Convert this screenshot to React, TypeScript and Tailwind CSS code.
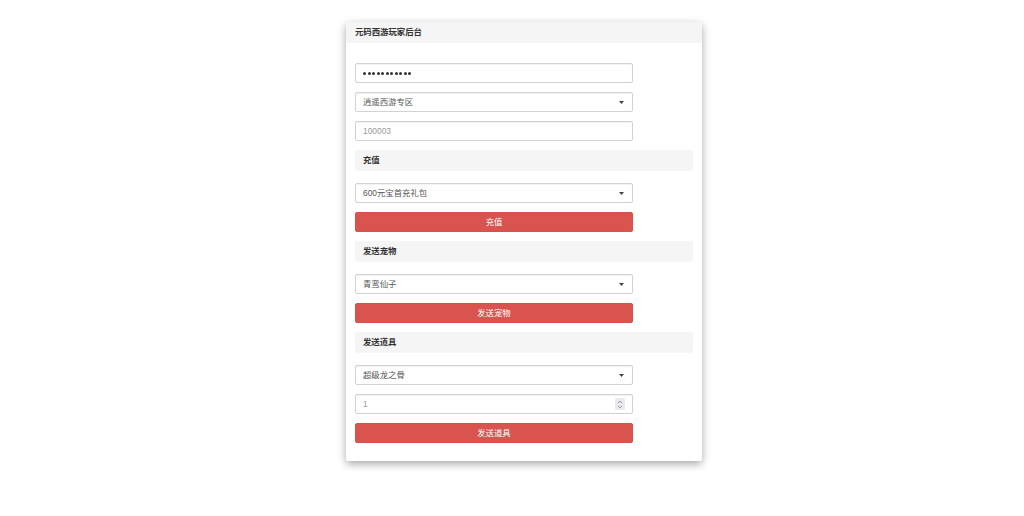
import React from "react";

const font = { fontFamily: '"Liberation Sans", "Noto Sans CJK SC", sans-serif' };

function Arrow() {
  return (
    <svg className="pointer-events-none absolute right-[8px] top-[8px]" width="5" height="3" viewBox="0 0 5 3">
      <path d="M0 0 L5 0 L2.5 3 Z" fill="#444" />
    </svg>
  );
}

const boxCls =
  "relative mb-[9px] h-[20px] w-[278px] rounded-[2px] border border-[#d2d2d2] bg-white shadow-[inset_0_1px_1px_rgba(0,0,0,0.06)]";

function Select({ value }: { value: string }) {
  return (
    <div className={boxCls}>
      <div className="pl-[7px] text-[8.4px] leading-[18px] text-[#555]">{value}</div>
      <Arrow />
    </div>
  );
}

function Input({ value, muted, spinner }: { value: string; muted?: boolean; spinner?: boolean }) {
  return (
    <div className={boxCls}>
      <div className={"pl-[7px] text-[8.4px] leading-[18px] " + (muted ? "text-[#999]" : "text-[#555]")}>{value}</div>
      {spinner && (
        <div className="absolute right-[7px] top-[3px] flex h-[12px] w-[10px] flex-col items-center justify-center rounded-[1px] bg-[#ebebef]">
          <svg width="6" height="9" viewBox="0 0 6 9">
            <path d="M1 3.2 L3 1.2 L5 3.2" stroke="#777" strokeWidth="0.8" fill="none" />
            <path d="M1 5.8 L3 7.8 L5 5.8" stroke="#777" strokeWidth="0.8" fill="none" />
          </svg>
        </div>
      )}
    </div>
  );
}

function Button({ label }: { label: string }) {
  return (
    <div className="mb-[9px] h-[20px] w-[278px] rounded-[2px] border border-[#d6504c] bg-[#d9534f] text-center text-[8.4px] leading-[18px] text-white">
      {label}
    </div>
  );
}

function Section({ label }: { label: string }) {
  return (
    <div className="mb-[12px] h-[21px] w-full rounded-[2px] bg-[#f5f5f5] pl-[8px] text-[8.4px] font-bold leading-[21px] text-[#333]">
      {label}
    </div>
  );
}

export default function App() {
  return (
    <div className="min-h-[516px] w-[1024px] bg-white pt-[22px]" style={font}>
      <div className="ml-[346px] w-[356px] rounded-[2px] bg-white shadow-[0_3px_8px_rgba(0,0,0,0.35)]">
        <div className="h-[21px] rounded-t-[2px] bg-[#f5f5f5] pl-[9px] text-[8.4px] font-bold leading-[21px] text-[#333]">
          元码西游玩家后台
        </div>
        <div className="px-[9px] pb-[9px] pt-[20px]">
          <div className={boxCls}>
            <div className="flex h-full items-center gap-[1.5px] pl-[7px]">
              {Array.from({ length: 11 }).map((_, i) => (
                <span key={i} className="block h-[3px] w-[3px] rounded-full bg-[#333]" />
              ))}
            </div>
          </div>
          <Select value="逍遥西游专区" />
          <Input value="100003" muted />
          <Section label="充值" />
          <Select value="600元宝首充礼包" />
          <Button label="充值" />
          <Section label="发送宠物" />
          <Select value="青鸾仙子" />
          <Button label="发送宠物" />
          <Section label="发送道具" />
          <Select value="超级龙之骨" />
          <Input value="1" muted spinner />
          <Button label="发送道具" />
        </div>
      </div>
    </div>
  );
}
